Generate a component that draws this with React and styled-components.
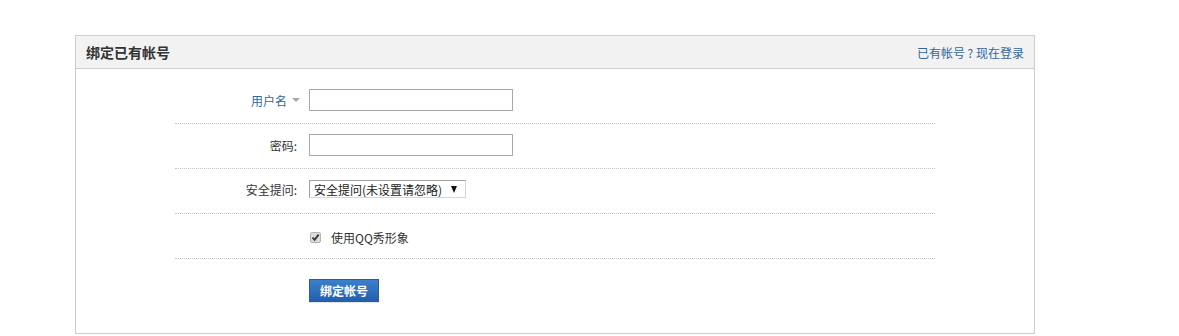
import React from "react"
import styled, { createGlobalStyle } from "styled-components"

const GlobalStyle = createGlobalStyle`
body {
    margin: 0;
    background: #fff;
    font-family: "Noto Sans CJK SC", "Liberation Sans", sans-serif;
    font-size: 12px;
    color: #333;
}
`

const Page = styled.div`
padding: 35px 0 0 75px;
`

const Box = styled.div`
width: 960px;
box-sizing: border-box;
border: 1px solid #cdcdcd;
`

const Header = styled.div`
height: 32px;
background: #f2f2f2;
border-bottom: 1px solid #cdcdcd;
display: flex;
align-items: center;
justify-content: space-between;
padding: 0 10px;
`

const Title = styled.h3`
margin: 0;
font-size: 14px;
font-weight: bold;
color: #333;
`

const Link = styled.a`
color: #336699;
text-decoration: none;
font-size: 12px;
`

const Body = styled.div`
padding: 10px 0 31px;
`

const Form = styled.div`
width: 760px;
margin: 0 auto;
`

const Row = styled.div`
display: flex;
align-items: ${p => (p.top ? "flex-start" : "center")};
height: ${p => p.h || 45}px;
padding-top: ${p => p.pt || 0}px;
padding-bottom: ${p => p.pb || 0}px;
box-sizing: border-box;
border-bottom: ${p => (p.last ? "none" : "1px dotted #c4c4c4")};
`

const Label = styled.label`
width: 125px;
padding-right: 3px;
box-sizing: border-box;
margin-right: 9px;
text-align: right;
color: ${p => (p.link ? "#336699" : "#333")};
display: flex;
justify-content: flex-end;
align-items: center;
`

const Caret = styled.span`
display: inline-block;
width: 0;
height: 0;
border-left: 4px solid transparent;
border-right: 4px solid transparent;
border-top: 4px solid #aaa;
margin: 0 -3px 0 5px;
`

const TextInput = styled.input`
width: 204px;
height: 22px;
box-sizing: border-box;
border: 1px solid #a9a9a9;
padding: 0 4px;
margin: 0;
outline: none;
`

const Select = styled.div`
width: 157px;
height: 18px;
box-sizing: border-box;
border: 1px solid #a0a0a0;
border-right-color: #d6d6d6;
border-bottom-color: #d6d6d6;
display: flex;
align-items: center;
justify-content: space-between;
padding: 0 8px 0 4px;
color: #222;
font-size: 12px;
`

const Arrow = styled.span`
width: 0;
height: 0;
border-left: 3.5px solid transparent;
border-right: 3.5px solid transparent;
border-top: 7px solid #111;
`

const Check = styled.label`
display: flex;
align-items: center;
margin-left: 1px;
color: #333;
`

const Box13 = styled.span`
width: 11px;
height: 11px;
box-sizing: border-box;
border: 1px solid #b4b4b4;
border-radius: 2px;
background: #dcdcdc;
display: inline-flex;
align-items: center;
justify-content: center;
margin-right: 10px;
`

const Button = styled.button`
width: 70px;
height: 23px;
padding: 0;
border: 1px solid #2a5c9e;
background: linear-gradient(#3c7fcb, #2360ad);
color: #fff;
font-family: inherit;
font-size: 12px;
font-weight: bold;
box-shadow: 0 1px 0 #e4e4e4;
cursor: pointer;
`

const Spacer = styled.div`
width: 134px;
flex-shrink: 0;
`

const App = () => {
    return (
        <Page>
            <GlobalStyle />
            <Box>
                <Header>
                    <Title>绑定已有帐号</Title>
                    <Link href="#">已有帐号 ? 现在登录</Link>
                </Header>
                <Body>
                    <Form>
                        <Row pb={2}>
                            <Label link>用户名<Caret /></Label>
                            <TextInput type="text" />
                        </Row>
                        <Row pb={2}>
                            <Label>密码:</Label>
                            <TextInput type="password" />
                        </Row>
                        <Row pb={4}>
                            <Label>安全提问:</Label>
                            <Select>
                                安全提问(未设置请忽略)
                                <Arrow />
                            </Select>
                        </Row>
                        <Row pt={3}>
                            <Spacer />
                            <Check>
                                <Box13>
                                    <svg width="9" height="9" viewBox="0 0 9 9">
                                        <path d="M1.5 4.5 L3.6 6.8 L7.6 1.6" fill="none" stroke="#333" strokeWidth="1.8" />
                                    </svg>
                                </Box13>
                                使用QQ秀形象
                            </Check>
                        </Row>
                        <Row last top pt={20} h={43}>
                            <Spacer />
                            <Button>绑定帐号</Button>
                        </Row>
                    </Form>
                </Body>
            </Box>
        </Page>
    )
}

export default App
